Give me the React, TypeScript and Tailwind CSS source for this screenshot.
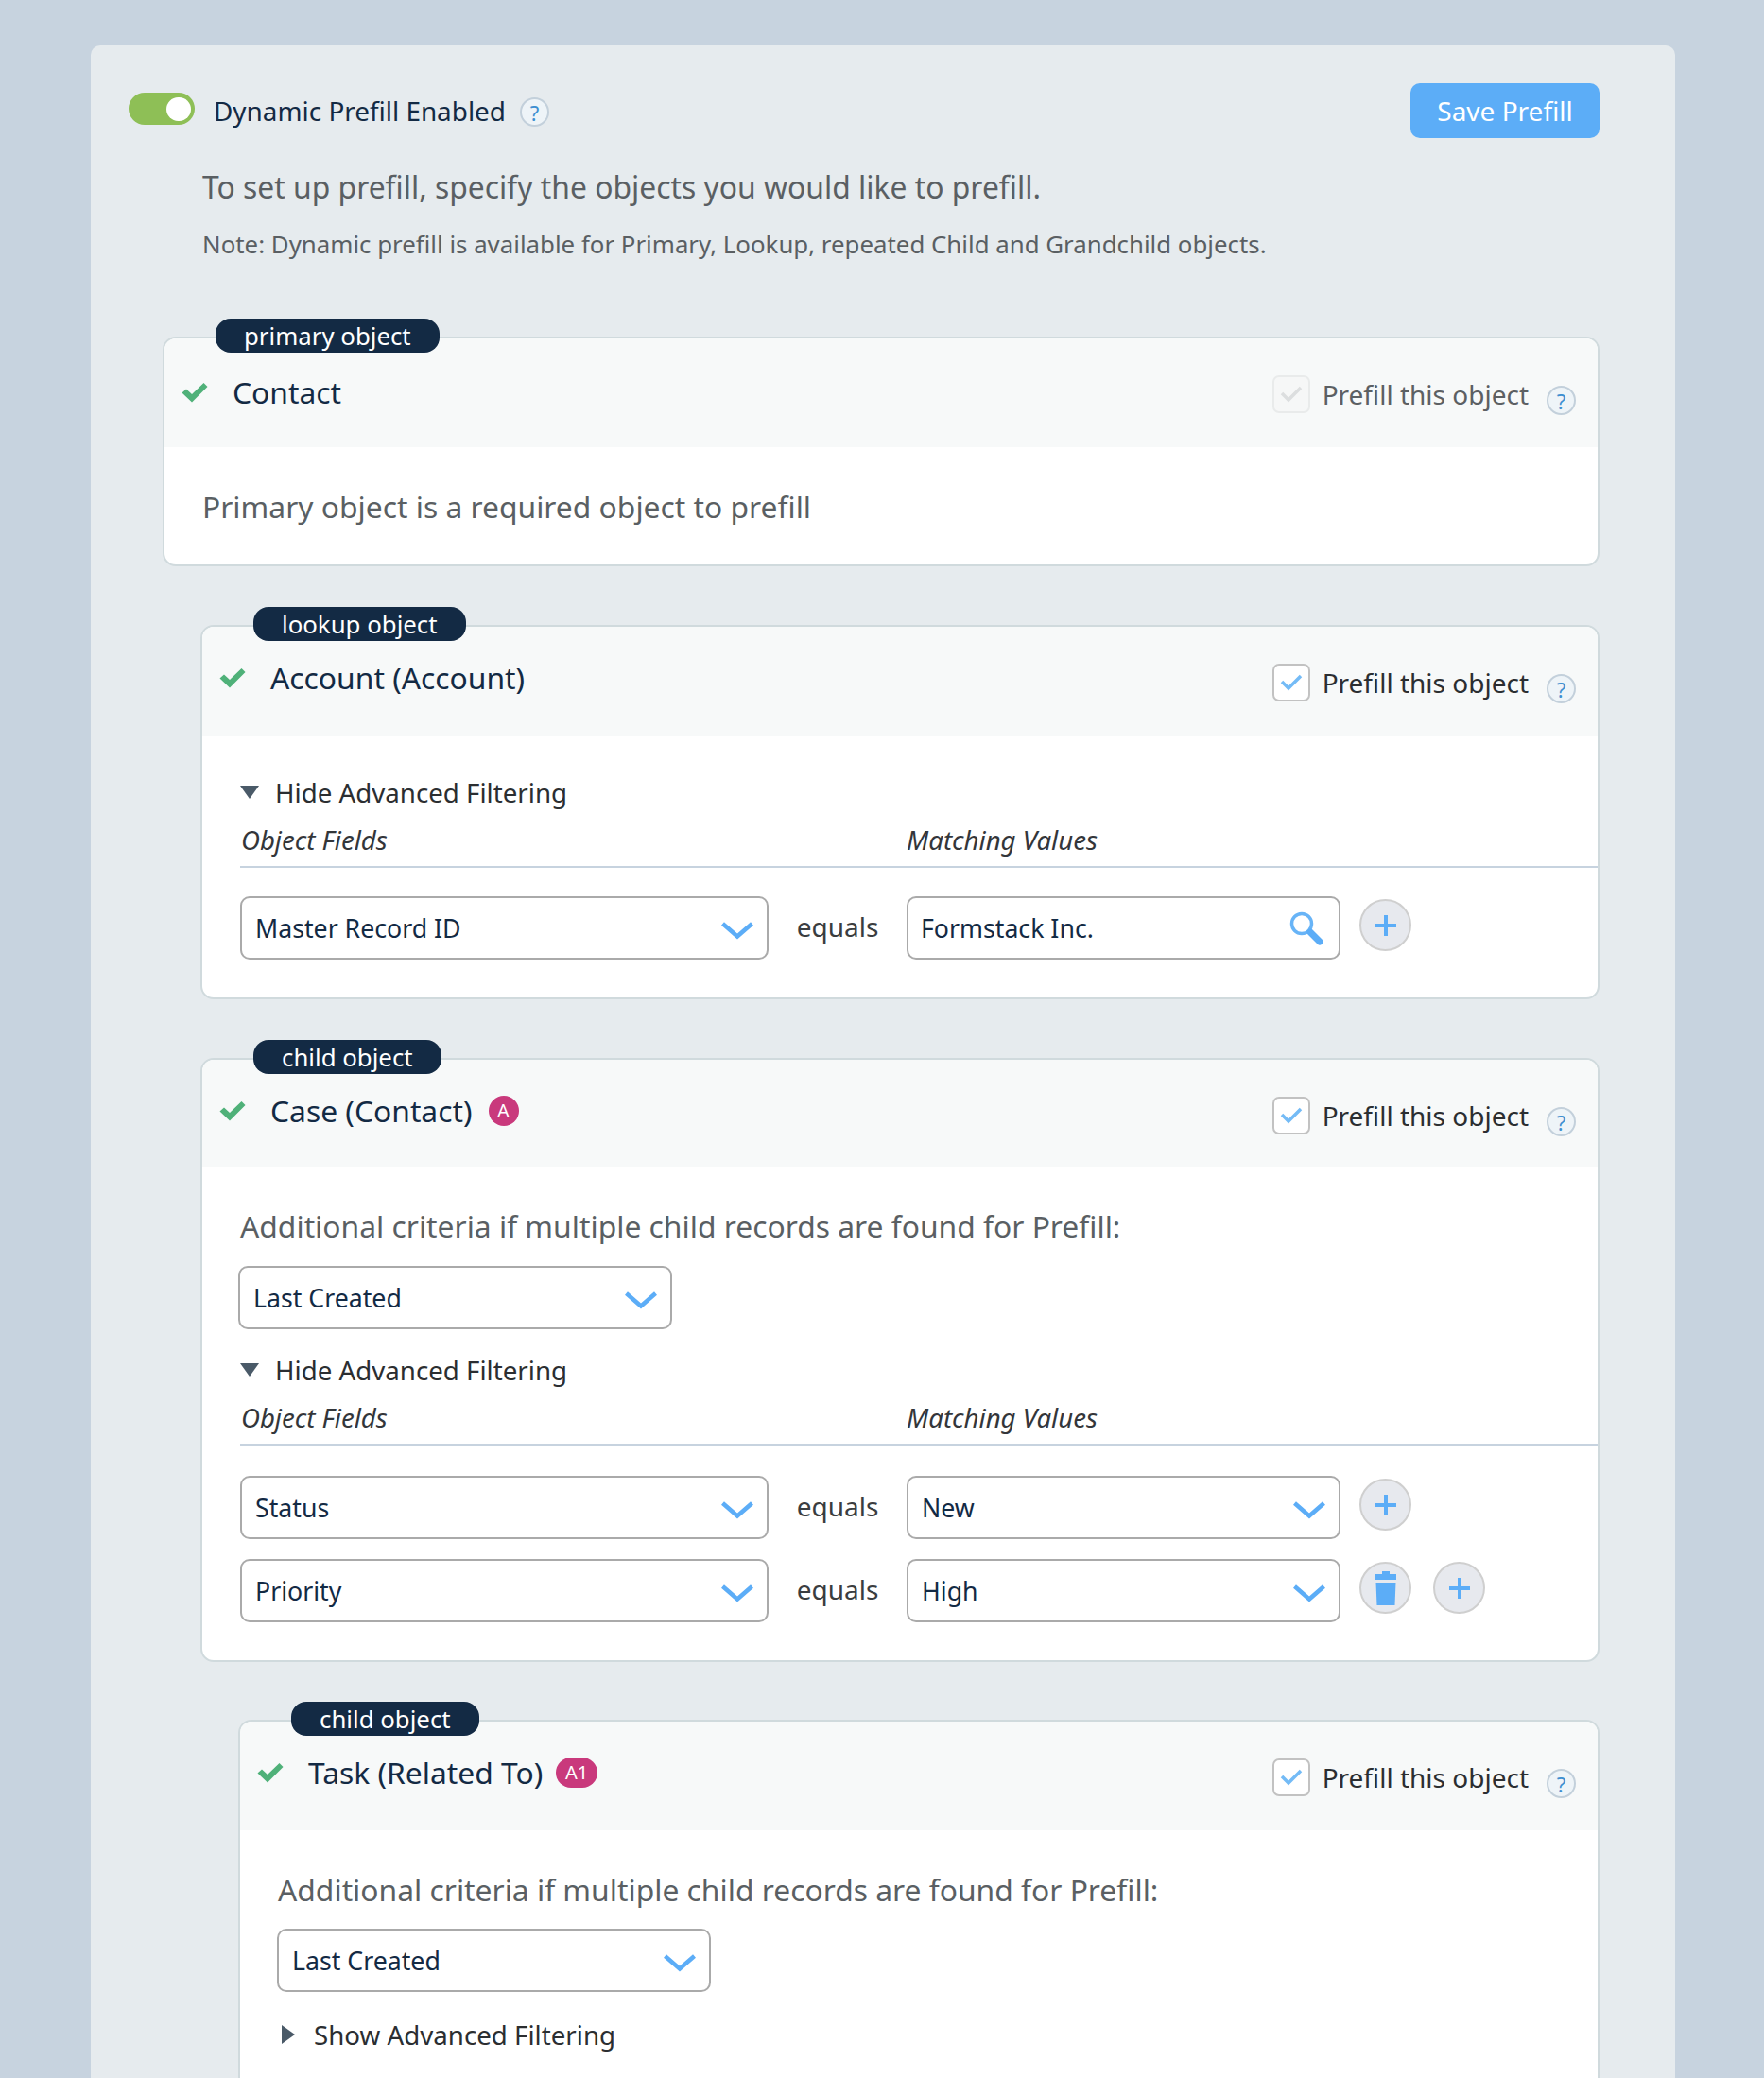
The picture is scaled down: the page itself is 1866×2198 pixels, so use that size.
import React from "react";

const font = { fontFamily: '"Noto Sans", "Open Sans", sans-serif' };

function Help({ className = "" }: { className?: string }) {
  return (
    <span className={"flex h-[31px] w-[31px] shrink-0 items-center justify-center rounded-full border-2 border-[#c3d0db] bg-[#eef4f8] text-[22px] leading-none text-[#3d8fd1] " + className}>?</span>
  );
}

function GreenCheck() {
  return (
    <svg width="28" height="22" viewBox="0 0 28 22" className="shrink-0">
      <path d="M0.5 11.5 L5 7.5 L11 13 L23.5 1 L27.5 5 L11 21.5 Z" fill="#4fb179" />
    </svg>
  );
}

function Chevron() {
  return (
    <svg width="36" height="20" viewBox="0 0 36 20" className="shrink-0">
      <path d="M2.5 3 L18 16.5 L33.5 3" fill="none" stroke="#5cadf7" strokeWidth="4.5" />
    </svg>
  );
}

function Select({ value, className }: { value: string; className: string }) {
  return (
    <div className={"flex h-[67px] shrink-0 items-center justify-between rounded-[10px] border-2 border-[#aaaaaa] bg-white pl-[14px] pr-[13px] text-[26.7px] text-[#132a44] " + className}>
      <span className="mt-[1px]">{value}</span>
      <span className="mt-[5px]"><Chevron /></span>
    </div>
  );
}

function Circle({ children }: { children: React.ReactNode }) {
  return (
    <span className="flex h-[55px] w-[55px] shrink-0 items-center justify-center rounded-full border-2 border-[#cfcfcf] bg-[#e7e9ee]">{children}</span>
  );
}

function Plus() {
  return (
    <svg width="24" height="24" viewBox="0 0 24 24">
      <path d="M12 1 V23 M1 12 H23" stroke="#5cadf7" strokeWidth="4" />
    </svg>
  );
}

function Trash() {
  return (
    <svg width="24" height="38" viewBox="0 0 24 38">
      <path d="M8 1 H16 V4 H23 V10 H1 V4 H8 Z" fill="#5cadf7" />
      <path d="M1.5 13 H22.5 L21.5 37 H2.5 Z" fill="#5cadf7" />
    </svg>
  );
}

function SearchIcon() {
  return (
    <svg width="38" height="36" viewBox="0 0 38 36">
      <circle cx="14" cy="13" r="10.5" fill="none" stroke="#68b4f7" strokeWidth="3.5" />
      <path d="M23 22 L33 32" stroke="#5cadf7" strokeWidth="7" strokeLinecap="round" />
    </svg>
  );
}

function Checkbox({ disabled }: { disabled?: boolean }) {
  return (
    <span className={"flex h-[40px] w-[40px] shrink-0 items-center justify-center rounded-[7px] border-2 " + (disabled ? "border-[#e9ebeb] bg-[#f6f7f7]" : "border-[#c2c2c2] bg-white")}>
      <svg width="26" height="20" viewBox="0 0 26 20">
        <path d="M3 9 L10 16 L23 3" fill="none" stroke={disabled ? "#dcdedf" : "#74bbf6"} strokeWidth="3.5" />
      </svg>
    </span>
  );
}

function Triangle({ open }: { open: boolean }) {
  return open ? (
    <svg width="20" height="14" viewBox="0 0 20 14" className="shrink-0">
      <path d="M0 0 H20 L10 14 Z" fill="#4a5a68" />
    </svg>
  ) : (
    <svg width="14" height="20" viewBox="0 0 14 20" className="shrink-0">
      <path d="M0 0 L14 10 L0 20 Z" fill="#4a5a68" />
    </svg>
  );
}

function Card({
  label,
  title,
  badge,
  badgeGap,
  disabled,
  headerClass,
  titleTop = "pt-[30px]",
  className,
  children,
}: {
  label: string;
  title: string;
  badge?: React.ReactNode;
  badgeGap?: string;
  disabled?: boolean;
  headerClass: string;
  titleTop?: string;
  className: string;
  children: React.ReactNode;
}) {
  return (
    <div className={"relative rounded-[14px] border-2 border-[#d0dadd] bg-white " + className}>
      <span className="absolute left-[54px] top-[-21px] flex h-[36px] items-center rounded-[16px] bg-[#132a44] px-[30px] text-[25.8px] text-white">{label}</span>
      <div className={"flex items-start justify-between rounded-t-[12px] bg-[#f7f9f9] pr-[23px] " + headerClass}>
        <div className={"flex items-center pl-[18px] " + titleTop}>
          <GreenCheck />
          <span className="ml-[26px] text-[31.8px] leading-[48px] text-[#132a44]">{title}</span>
          {badge ? <span className={badgeGap}>{badge}</span> : null}
        </div>
        <div className="flex items-start pt-[39px]">
          <Checkbox disabled={disabled} />
          <span className={"ml-[13px] mt-[1px] text-[28px] leading-[38px] " + (disabled ? "text-[#5c6063]" : "text-[#2b2e31]")}>Prefill this object</span>
          <Help className="ml-[19px] mt-[11px]" />
        </div>
      </div>
      {children}
    </div>
  );
}

function FilterHead({ topClass }: { topClass: string }) {
  return (
    <div className={topClass}>
      <Toggle label="Hide Advanced Filtering" open />
      <div className="mt-[20px] flex h-[30px] items-center pl-[1px] text-[27.6px] italic leading-[30px] text-[#33363a]">
        <span className="w-[704px]">Object Fields</span>
        <span>Matching Values</span>
      </div>
      <div className="mt-[13px] h-[2px] bg-[#c7d3df]" />
    </div>
  );
}

function Toggle({ label, open }: { label: string; open: boolean }) {
  return (
    <div className="flex h-[30px] items-center text-[27.7px] leading-[30px] text-[#2b2e31]">
      <Triangle open={open} />
      <span className={open ? "ml-[17px]" : "ml-[20px]"}>{label}</span>
    </div>
  );
}

function Equals() {
  return <span className="mb-[3px] w-[146px] shrink-0 text-center text-[28px] text-[#3a3d40]">equals</span>;
}

const Badge = ({ text, className }: { text: string; className: string }) => (
  <span className={"flex h-[32px] items-center justify-center rounded-full bg-[#c9397c] text-[20px] text-white " + className}>{text}</span>
);

export default function App() {
  return (
    <div className="h-[2198px] overflow-hidden bg-[#c7d3df] pl-[96px] pt-[48px]" style={font}>
      <div className="min-h-[2200px] w-[1676px] rounded-[10px] bg-[#e6ebee] pt-[40px]">
        <div className="flex h-[58px] items-center justify-between pl-[40px] pr-[80px]">
          <div className="flex items-center">
            <span className="mb-[4px] flex h-[34px] w-[70px] items-center justify-end rounded-full bg-[#8ebf56] pr-[4px]">
              <span className="h-[25px] w-[26px] rounded-full bg-white" />
            </span>
            <span className="ml-[20px] text-[27.9px] leading-[38px] text-[#132a44]">Dynamic Prefill Enabled</span>
            <Help className="ml-[15px] mt-[3px]" />
          </div>
          <button className="flex h-[58px] w-[200px] items-center justify-center rounded-[10px] bg-[#5cadf7] text-[28px] text-white">Save Prefill</button>
        </div>

        <div className="pl-[118px]">
          <p className="mt-[30px] text-[31.85px] leading-[44px] text-[#5a5f63]">To set up prefill, specify the objects you would like to prefill.</p>
          <p className="mt-[20px] text-[25.84px] leading-[36px] text-[#5a5f63]">Note: Dynamic prefill is available for Primary, Lookup, repeated Child and Grandchild objects.</p>
        </div>

        <div className="mt-[80px] flex flex-col pl-[76px] pr-[80px]">
          <Card label="primary object" title="Contact" disabled headerClass="h-[115px]" titleTop="pt-[33px]" className="">
            <div className="h-[124px] pl-[40px] pt-[41px] text-[31.8px] leading-[44px] text-[#5a5f63]">Primary object is a required object to prefill</div>
          </Card>

          <Card label="lookup object" title="Account (Account)" headerClass="h-[115px]" className="ml-[40px] mt-[62px]">
            <div className="pb-[40px] pl-[40px]">
              <FilterHead topClass="pt-[45px]" />
              <div className="mt-[30px] flex items-center">
                <Select value="Master Record ID" className="w-[559px]" />
                <Equals />
                <div className="flex h-[67px] w-[459px] shrink-0 items-center justify-between rounded-[10px] border-2 border-[#aaaaaa] bg-white pl-[13px] pr-[15px] text-[26.7px] text-[#132a44]">
                  <span className="mt-[1px]">Formstack Inc.</span>
                  <SearchIcon />
                </div>
                <span className="ml-[20px] mb-[6px]"><Circle><Plus /></Circle></span>
              </div>
            </div>
          </Card>

          <Card
            label="child object"
            title="Case (Contact)"
            badge={<Badge text="A" className="w-[32px]" />}
            badgeGap="ml-[17px]"
            headerClass="h-[113px]"
            className="ml-[40px] mt-[62px]"
          >
            <div className="pb-[40px] pl-[40px]">
              <p className="pt-[45px] text-[31.8px] leading-[36px] text-[#5a5f63]">Additional criteria if multiple child records are found for Prefill:</p>
              <Select value="Last Created" className="-ml-[2px] mt-[24px] w-[459px]" />
              <FilterHead topClass="mt-[28px]" />
              <div className="mt-[32px] flex items-center">
                <Select value="Status" className="w-[559px]" />
                <Equals />
                <Select value="New" className="w-[459px]" />
                <span className="ml-[20px] mb-[6px]"><Circle><Plus /></Circle></span>
              </div>
              <div className="mt-[21px] flex items-center">
                <Select value="Priority" className="w-[559px]" />
                <Equals />
                <Select value="High" className="w-[459px]" />
                <span className="ml-[20px] mb-[6px]"><Circle><Trash /></Circle></span>
                <span className="ml-[23px] mb-[6px]"><Circle><Plus /></Circle></span>
              </div>
            </div>
          </Card>

          <Card
            label="child object"
            title="Task (Related To)"
            badge={<Badge text="A1" className="w-[44px]" />}
            badgeGap="ml-[14px]"
            headerClass="h-[115px]"
            className="ml-[80px] mt-[61px]"
          >
            <div className="pb-[120px] pl-[40px]">
              <p className="pt-[45px] text-[31.8px] leading-[36px] text-[#5a5f63]">Additional criteria if multiple child records are found for Prefill:</p>
              <Select value="Last Created" className="-ml-[1px] mt-[23px] w-[459px]" />
              <div className="mt-[30px] pl-[4px]"><Toggle label="Show Advanced Filtering" open={false} /></div>
            </div>
          </Card>
        </div>
      </div>
    </div>
  );
}
